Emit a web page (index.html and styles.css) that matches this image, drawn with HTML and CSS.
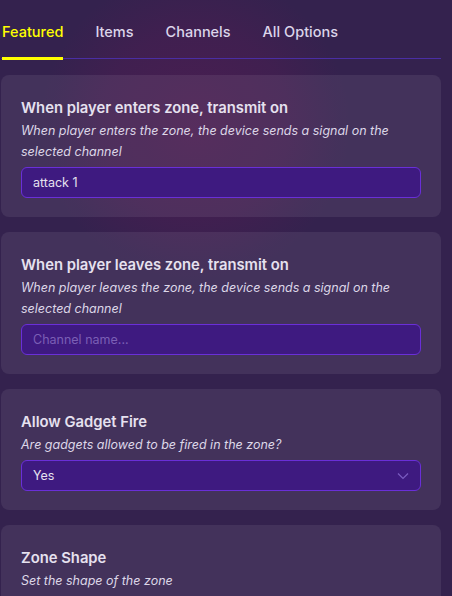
FILE: index.html
```html
<!DOCTYPE html>
<html>
<head>
<meta charset="utf-8">
<link rel="stylesheet" href="styles.css">
</head>
<body>
<div class="page">
  <nav class="tabs">
    <div class="tab active">Featured</div>
    <div class="tab">Items</div>
    <div class="tab">Channels</div>
    <div class="tab">All Options</div>
  </nav>
  <div class="list">
    <section class="card">
      <h2 class="title">When player enters zone, transmit on</h2>
      <p class="desc">When player enters the zone, the device sends a signal on the selected channel</p>
      <div class="field">attack 1</div>
    </section>
    <section class="card">
      <h2 class="title">When player leaves zone, transmit on</h2>
      <p class="desc">When player leaves the zone, the device sends a signal on the selected channel</p>
      <div class="field placeholder">Channel name...</div>
    </section>
    <section class="card">
      <h2 class="title">Allow Gadget Fire</h2>
      <p class="desc">Are gadgets allowed to be fired in the zone?</p>
      <div class="field select"><span>Yes</span>
        <svg class="chev" width="12" height="8" viewBox="0 0 12 8"><path d="M1 1.5 L6 6.5 L11 1.5" fill="none" stroke="#7a5cc0" stroke-width="1.2"/></svg>
      </div>
    </section>
    <section class="card">
      <h2 class="title">Zone Shape</h2>
      <p class="desc">Set the shape of the zone</p>
    </section>
  </div>
</div>
</body>
</html>
```

FILE: styles.css
```css
html, body {
  margin: 0;
  padding: 0;
  height: 100%;
  overflow: hidden;
}
body {
  background:
    radial-gradient(circle at 195px 125px, rgba(95, 25, 85, 0.5) 0, rgba(95, 25, 85, 0.28) 95px, rgba(95, 25, 85, 0) 155px),
    #34224e;
  font-family: Inter, "Noto Sans", sans-serif;
  color: #e4dfee;
}
.page {
  width: 440px;
  padding-left: 1px;
}
.tabs {
  display: flex;
  gap: 32px;
  height: 58px;
  border-bottom: 1px solid #4a2ea4;
  padding-left: 1px;
}
.tab {
  font-size: 14.5px;
  line-height: 20px;
  padding-top: 22px;
  color: #dcd5ea;
  font-weight: 500;
  box-sizing: border-box;
  height: 60px;
}
.tab.active {
  color: #ffff00;
  border-bottom: 3px solid #ffff00;
}
.list {
  display: flex;
  flex-direction: column;
  gap: 15px;
  padding-top: 16px;
}
.card {
  background: rgba(255, 255, 255, 0.075);
  border-radius: 8px;
  padding: 21px 20px 19px 20px;
}
.title {
  margin: 0;
  font-size: 14.8px;
  line-height: 24px;
  font-weight: 600;
  color: #e6e1ef;
}
.desc {
  margin: 0;
  font-size: 12.5px;
  line-height: 21px;
  font-style: italic;
  color: #ddd7e8;
}
.field {
  margin-top: 5px;
  height: 31px;
  box-sizing: border-box;
  background: #3e1a80;
  border: 1px solid #6a2fd8;
  border-radius: 6px;
  padding: 0 11px;
  display: flex;
  align-items: center;
  font-size: 12.5px;
  color: #e6e1ef;
}
.field.placeholder {
  color: #7b5fb5;
}
.field.select {
  justify-content: space-between;
}
.chev {
  margin-right: 0;
}
```
